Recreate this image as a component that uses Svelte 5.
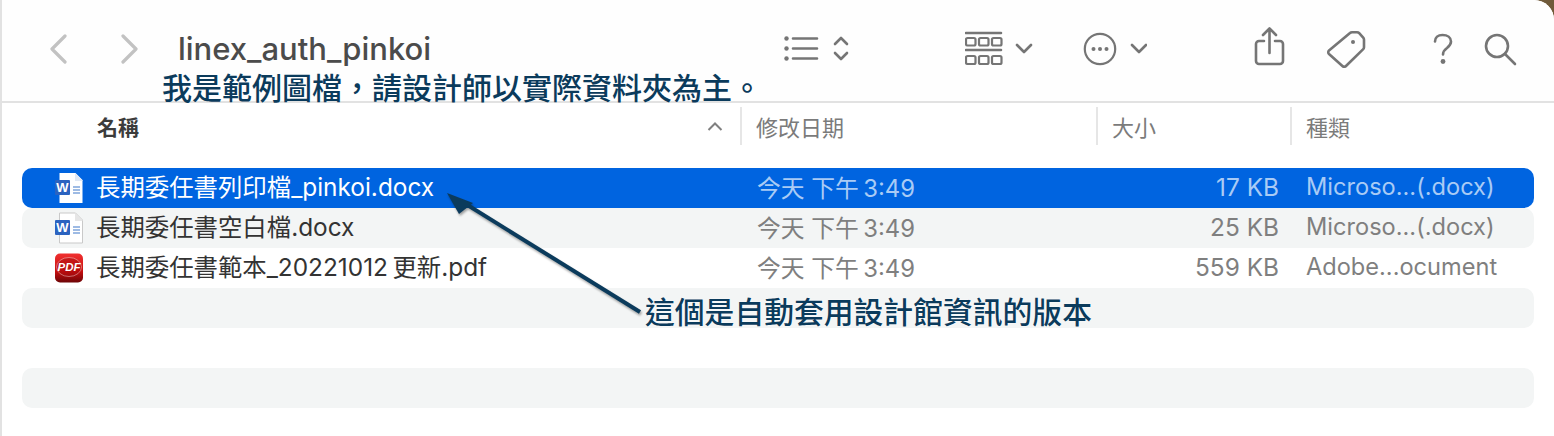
<script>
	const rows = [
		{ name: '長期委任書列印檔_pinkoi.docx', date: '今天 下午\u20093:49', size: '17 KB', kind: 'Microso...(.docx)', icon: 'word', state: 'selected' },
		{ name: '長期委任書空白檔.docx', date: '今天 下午\u20093:49', size: '25 KB', kind: 'Microso...(.docx)', icon: 'word', state: 'odd' },
		{ name: '長期委任書範本_20221012\u2009更新.pdf', date: '今天 下午\u20093:49', size: '559 KB', kind: 'Adobe...ocument', icon: 'pdf', state: 'even' },
		{ state: 'odd' },
		{ state: 'even' },
		{ state: 'odd' }
	]
</script>

<div class="window">
	<header class="toolbar">
		<svg class="nav" width="18" height="30" viewBox="0 0 18 30"><path d="M16 2 3 15l13 13" /></svg>
		<svg class="nav forward" width="18" height="30" viewBox="0 0 18 30"><path d="M2 2l13 13L2 28" /></svg>
		<h1>linex_auth_pinkoi</h1>

		<svg class="icon list" width="66" height="30" viewBox="0 0 66 30">
			<circle cx="2.5" cy="4.5" r="2.2" class="dot" /><circle cx="2.5" cy="14.5" r="2.2" class="dot" /><circle cx="2.5" cy="24.5" r="2.2" class="dot" />
			<path d="M9 4.5h24M9 14.5h24M9 24.5h24" />
			<path d="M51 10l6-6 6 6M51 19l6 6 6-6" />
		</svg>

		<svg class="icon group" width="68" height="36" viewBox="0 0 68 36">
			<path d="M1 2h35M1 19h35" />
			<rect x="1" y="7" width="9.5" height="7.5" rx="1.5" class="thin" /><rect x="14" y="7" width="9.5" height="7.5" rx="1.5" class="thin" /><rect x="27" y="7" width="9.5" height="7.5" rx="1.5" class="thin" />
			<rect x="1" y="25" width="9.5" height="8" rx="1.5" class="thin" /><rect x="14" y="25" width="9.5" height="8" rx="1.5" class="thin" /><rect x="27" y="25" width="9.5" height="8" rx="1.5" class="thin" />
			<path d="M52 14l7 7 7-7" />
		</svg>

		<svg class="icon action" width="64" height="34" viewBox="0 0 64 34">
			<circle cx="17" cy="17" r="15.2" class="thin" />
			<circle cx="10.5" cy="17" r="2" class="dot" /><circle cx="17" cy="17" r="2" class="dot" /><circle cx="23.5" cy="17" r="2" class="dot" />
			<path d="M49 13l7 7 7-7" />
		</svg>

		<svg class="icon share" width="32" height="40" viewBox="0 0 32 40">
			<path d="M10 14H5a3 3 0 0 0-3 3v17a3 3 0 0 0 3 3h21a3 3 0 0 0 3-3V17a3 3 0 0 0-3-3h-5" />
			<path d="M15.5 26V2M9 8l6.5-6.500L22 8" />
		</svg>

		<svg class="icon tag" width="42" height="38" viewBox="0 0 42 38">
			<path d="M3 20.500 24 3a3 3 0 0 1 2-.8h5a3 3 0 0 1 2.200 1l4 4.500a3 3 0 0 1 .8 2v7.500a3 3 0 0 1-1 2.200L20 36a2.500 2.500 0 0 1-3.600 0L3 24a2.400 2.400 0 0 1 0-3.500z" />
			<circle cx="27" cy="12" r="2" class="dot" />
		</svg>

		<svg class="icon help" width="20" height="32" viewBox="0 0 20 32">
			<path d="M2 8.500C2 4.500 5 2 9.500 2 14.500 2 18 4.500 18 8.500c0 3-1.500 4.500-4 6.500-2.500 1.800-4 3.300-4 6.500" />
			<circle cx="10" cy="28.500" r="2.400" class="dot" />
		</svg>

		<svg class="icon search" width="34" height="33" viewBox="0 0 34 33">
			<circle cx="13" cy="13" r="11" />
			<path d="M21 21l10 10" />
		</svg>
	</header>

	<div class="columns">
		<div class="col name">名稱
			<svg width="16" height="9" viewBox="0 0 16 9"><path d="M1.500 8 8 1.500 14.500 8" /></svg>
		</div>
		<div class="col">修改日期</div>
		<div class="col">大小</div>
		<div class="col">種類</div>
	</div>

	<div class="list-body">
		{#each rows as row}
			<div class="row {row.state}">
				{#if row.name}
					<div class="file">
						{#if row.icon === 'word'}
							<svg class="file-icon" width="30" height="32" viewBox="0 0 30 32">
								<path d="M5.500 1h16l7 7v23h-23z" fill="#fff" stroke={row.state === 'selected' ? 'none' : '#c9c9c9'} />
								<path d="M21 1v8h8z" fill={row.state === 'selected' ? '#dfe8f5' : '#e6e6e6'} />
								<path d="M19 15h7M19 18h7M19 21h7" stroke="#3f78c9" stroke-width="1.200" />
								<rect x="1" y="8" width="15" height="15" rx="1" fill="#2b63c0" />
								<text x="8.500" y="20" class="word">W</text>
							</svg>
						{:else}
							<svg class="file-icon" width="30" height="32" viewBox="0 0 30 32">
								<defs>
									<linearGradient id="pdf-bg" x1="0" y1="0" x2="0" y2="1">
										<stop offset="0" stop-color="#f03030" />
										<stop offset="0.6" stop-color="#c90f10" />
										<stop offset="1" stop-color="#6d0507" />
									</linearGradient>
								</defs>
								<rect x="1" y="1.500" width="28" height="29" rx="5" fill="url(#pdf-bg)" />
								<ellipse cx="15" cy="15" rx="12.500" ry="9.500" fill="#a80c0e" fill-opacity="0.5" stroke="#fff" stroke-opacity="0.4" />
								<text x="15" y="19" class="pdf">PDF</text>
							</svg>
						{/if}
						<span>{row.name}</span>
					</div>
					<div class="date">{row.date}</div>
					<div class="size">{row.size}</div>
					<div class="kind">{row.kind}</div>
				{/if}
			</div>
		{/each}
	</div>

	<p class="note note-top">我是範例圖檔，請設計師以實際資料夾為主。</p>
	<p class="note note-arrow">這個是自動套用設計館資訊的版本</p>
	<svg class="arrow" width="200" height="125" viewBox="0 0 200 125">
		<path d="M193 122 14 11" class="shaft" />
		<path d="M0 3 26 13 12 24z" class="head" />
	</svg>
</div>

<style>
	:global(body) {
		background: #6f5a3a;
	}

	.window {
		position: relative;
		box-sizing: border-box;
		height: 436px;
		overflow: hidden;
		background: #fff;
		border-left: 2px solid #e2e2e2;
		border-top-right-radius: 20px;
		font-family: Inter, 'Noto Sans CJK TC', sans-serif;
	}

	.toolbar {
		box-sizing: border-box;
		height: 103px;
		display: flex;
		align-items: center;
		padding-left: 47px;
		border-bottom: 2px solid #e2e2e2;
		background: #fefefe;
	}

	.toolbar svg {
		flex: none;
		fill: none;
		stroke: #757575;
		stroke-width: 2.600;
		stroke-linecap: round;
		stroke-linejoin: round;
	}

	.toolbar svg .thin {
		stroke-width: 2.200;
	}

	.toolbar svg .dot {
		fill: #757575;
		stroke: none;
	}

	.toolbar .nav {
		stroke: #c2c2c2;
		stroke-width: 3.200;
		margin-top: -4px;
	}

	.nav.forward {
		margin-left: 54px;
	}

	h1 {
		flex: none;
		margin: -5px 0 0 39px;
		width: 606px;
		font-size: 31px;
		font-weight: 500;
		color: #4b4b4b;
	}

	.icon.group {
		margin-left: 115px;
		margin-top: -3px;
	}

	.icon.list {
		margin-top: -3px;
	}

	.icon.action {
		margin-left: 50px;
		margin-top: -3px;
	}

	.icon.share {
		margin-left: 107px;
		margin-top: -7px;
	}

	.icon.tag {
		margin-left: 40px;
		margin-top: -3px;
	}

	.icon.help {
		margin-left: 65px;
		margin-top: -3px;
	}

	.icon.search {
		margin-left: 31px;
		margin-top: -3px;
	}

	.columns {
		display: grid;
		grid-template-columns: 740px 356px 194px 1fr;
		height: 47px;
		padding-top: 4px;
		box-sizing: border-box;
		margin-bottom: 18px;
	}

	.col {
		display: flex;
		align-items: center;
		height: 38px;
		padding-left: 14px;
		font-size: 22px;
		color: #7b7b7b;
		border-right: 2px solid #e6e6e6;
	}

	.col:last-child {
		border-right: 0;
	}

	.col.name {
		justify-content: space-between;
		padding: 0 17px 0 95px;
		font-size: 21px;
		font-weight: 700;
		color: #3c3c3c;
	}

	.col.name svg {
		fill: none;
		stroke: #808080;
		stroke-width: 2;
	}

	.list-body {
		padding: 0 20px;
	}

	.row {
		box-sizing: border-box;
		display: grid;
		grid-template-columns: 719px 356px 182px 1fr;
		align-items: center;
		height: 40px;
		padding-bottom: 3px;
		border-radius: 10px;
		font-size: 23.600px;
		color: #7f7f7f;
	}

	.odd {
		background: #f3f5f5;
	}

	.selected {
		background: #0064e0;
		color: #a9cbf5;
	}

	.file {
		display: flex;
		align-items: center;
		gap: 12px;
		padding-left: 32px;
		color: #333;
		font-size: 24.400px;
		white-space: nowrap;
	}

	.file span {
		padding-bottom: 2px;
	}

	.selected .file {
		color: #fff;
	}

	.file-icon {
		flex: none;
		margin-top: 3px;
	}

	.word {
		font: 700 13px 'Liberation Sans', sans-serif;
		fill: #fff;
		text-anchor: middle;
	}

	.pdf {
		font: italic 700 11.500px 'Liberation Sans', sans-serif;
		fill: #fff;
		text-anchor: middle;
	}

	.date {
		padding-left: 16px;
		font-size: 23.800px;
	}

	.size {
		text-align: right;
		font-size: 24.400px;
	}

	.kind {
		padding-left: 27px;
		white-space: nowrap;
	}

	.note {
		position: absolute;
		margin: 0;
		font-weight: 500;
		color: #0b3b5c;
		white-space: nowrap;
	}

	.note-top {
		left: 160px;
		top: 68px;
		font-size: 30px;
		line-height: 40px;
	}

	.note-arrow {
		left: 643px;
		top: 292px;
		font-size: 29.800px;
		line-height: 40px;
		text-shadow: 0 0 2px #fff;
	}

	.arrow {
		position: absolute;
		left: 445px;
		top: 190px;
		overflow: visible;
		filter: drop-shadow(1px 2px 1px rgba(0, 0, 0, 0.35));
	}

	.shaft {
		stroke: #0b3b5c;
		stroke-width: 4;
		fill: none;
	}

	.head {
		fill: #0b3b5c;
	}
</style>
